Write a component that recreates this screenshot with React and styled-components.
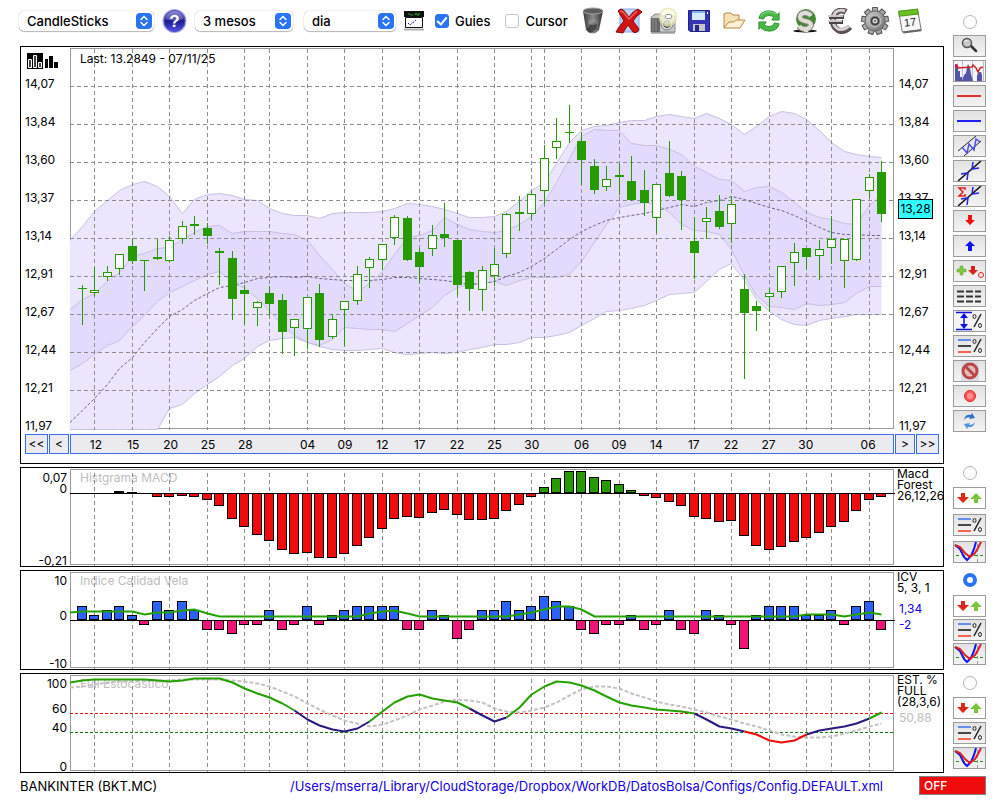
import React, { useState } from "react";
import styled, { createGlobalStyle, css } from "styled-components";

const GlobalStyle = createGlobalStyle`
    body {
        margin: 0;
        background: #fff;
        color: #000;
        font-family: Inter, "Liberation Sans", sans-serif;
        font-size: 12px;
    }
    * {
        box-sizing: border-box;
    }
`;

/* ---------- data ---------- */

const PLOT_W = 824;
const MAIN_H = 381;
const SUB_H = 96;

const MAIN_TOP = 48;

const ticks = [1, 4, 7, 10, 13, 15, 18, 21, 24, 27, 30, 33, 36, 37, 40, 43, 46, 49, 52, 55, 58, 60, 63];

const dates = [
    [1, "12"], [4, "15"], [7, "20"], [10, "25"], [13, "28"], [18, "04"], [21, "09"], [24, "12"], [27, "17"], [30, "22"],
    [33, "25"], [36, "30"], [40, "06"], [43, "09"], [46, "14"], [49, "17"], [52, "22"], [55, "27"], [58, "30"], [63, "06"],
];

const prices = ["14,07", "13,84", "13,60", "13,37", "13,14", "12,91", "12,67", "12,44", "12,21", "11,97"];

// high, body top, body bottom, low, rising
const candles = [
    [285, 288, 289, 325, 0], [267, 290, 293, 296, 1], [266, 272, 277, 281, 1], [254, 254, 269, 275, 1], [239, 246, 261, 264, 0],
    [260, 260, 261, 291, 0], [239, 257, 259, 260, 0], [236, 240, 261, 262, 1], [221, 226, 239, 244, 1], [216, 224, 226, 235, 0],
    [223, 228, 236, 244, 0], [248, 251, 253, 285, 0], [251, 258, 299, 320, 0], [285, 290, 294, 324, 0], [301, 302, 308, 326, 1],
    [286, 293, 304, 316, 0], [294, 300, 332, 354, 0], [319, 319, 328, 356, 1], [297, 297, 329, 349, 1], [284, 293, 340, 347, 0],
    [314, 319, 337, 339, 1], [301, 301, 310, 346, 1], [266, 274, 301, 305, 1], [257, 259, 268, 288, 1], [244, 244, 260, 270, 1],
    [215, 217, 238, 245, 1], [216, 218, 260, 261, 0], [248, 252, 267, 283, 0], [225, 235, 249, 256, 1], [203, 234, 238, 247, 0],
    [240, 240, 285, 295, 0], [271, 272, 289, 311, 0], [266, 270, 290, 311, 1], [248, 264, 276, 286, 1], [213, 214, 254, 258, 1],
    [196, 212, 214, 231, 0], [191, 194, 214, 220, 1], [145, 158, 191, 204, 1], [118, 141, 148, 159, 1], [105, 132, 133, 143, 0],
    [132, 141, 160, 185, 0], [159, 166, 190, 194, 0], [166, 179, 187, 191, 1], [164, 175, 177, 195, 0], [156, 181, 200, 201, 0],
    [170, 190, 203, 216, 0], [184, 184, 218, 233, 1], [141, 173, 196, 197, 0], [171, 176, 200, 230, 0], [217, 241, 253, 279, 0],
    [207, 218, 222, 239, 1], [195, 211, 227, 229, 0], [196, 204, 224, 243, 1], [274, 289, 313, 379, 0], [301, 306, 311, 331, 0],
    [288, 293, 297, 312, 1], [266, 266, 292, 298, 1], [243, 252, 263, 286, 1], [248, 248, 257, 270, 0], [240, 249, 256, 280, 1],
    [216, 239, 248, 264, 1], [239, 239, 261, 288, 1], [199, 199, 260, 261, 1], [174, 177, 191, 198, 1], [161, 172, 214, 222, 0],
];

// bands carry one extra leading point, on the left edge of the plot
const outerUpper = [
    240, 226, 211, 200, 190, 184, 181, 186, 196, 213, 199, 194, 193, 195, 199, 200, 208, 213, 215, 215, 218, 213, 212, 212, 212, 211,
    208, 203, 204, 206, 209, 213, 217, 217, 216, 211, 201, 190, 182, 163, 142, 130, 126, 125, 122, 120, 120, 116, 114, 116, 118, 113,
    118, 124, 134, 126, 116, 111, 113, 119, 130, 142, 151, 154, 156, 157,
];
const innerUpper = [
    309, 299, 293, 281, 272, 256, 253, 248, 247, 239, 232, 226, 225, 233, 231, 231, 231, 233, 234, 240, 255, 269, 283, 291, 283, 271,
    254, 237, 235, 230, 217, 224, 229, 231, 232, 230, 224, 216, 202, 182, 158, 136, 129, 130, 130, 143, 145, 145, 149, 154, 166, 172,
    179, 180, 191, 187, 186, 192, 202, 212, 217, 219, 223, 224, 205, 194,
];
const innerLower = [
    370, 363, 354, 345, 340, 326, 315, 301, 292, 286, 280, 274, 271, 282, 288, 298, 311, 325, 335, 342, 345, 339, 327, 328, 329, 329,
    331, 323, 315, 307, 295, 287, 284, 283, 281, 285, 280, 277, 277, 277, 274, 261, 242, 224, 207, 204, 202, 204, 212, 224, 230, 231,
    234, 249, 275, 295, 306, 307, 309, 303, 305, 304, 302, 293, 286, 286,
];
const outerLower = [
    429, 429, 429, 429, 429, 429, 429, 429, 408, 404, 393, 384, 376, 365, 358, 346, 340, 338, 337, 342, 346, 349, 350, 350, 349, 348,
    352, 354, 353, 352, 353, 352, 349, 347, 344, 344, 342, 337, 337, 335, 332, 325, 318, 311, 310, 308, 305, 300, 294, 293, 292, 281,
    269, 263, 280, 299, 311, 319, 324, 325, 320, 318, 316, 314, 314, 314,
];
const average = [
    422, 410, 398, 384, 368, 357, 342, 328, 316, 309, 300, 293, 287, 285, 282, 278, 277, 276, 277, 276, 278, 279, 280, 280, 280, 279,
    277, 277, 278, 279, 280, 282, 284, 283, 281, 276, 272, 266, 258, 249, 239, 231, 225, 220, 217, 215, 213, 210, 207, 204, 206, 202,
    200, 196, 199, 203, 207, 210, 215, 221, 227, 232, 234, 234, 235, 235,
];

const macd = [
    0, 0, 0, 2, 1, 0, -4, -4, -3, -4, -7, -13, -26, -34, -42, -48, -57, -61, -60, -65, -65, -61, -53, -45, -36, -26, -24, -25, -20,
    -17, -22, -27, -27, -26, -18, -12, -4, 6, 15, 22, 22, 16, 13, 9, 3, -3, -5, -9, -13, -24, -26, -29, -28, -43, -53, -57, -54, -49,
    -45, -40, -34, -29, -18, -7, -4,
];

const icv = [
    3, 1, 2, 3, 1, -1, 4, 2, 4, 2, -2, -2, -3, -1, -1, 2, -2, -1, 3, -1, 1, 2, 3, 3, 3, 3, -2, -2, 2, 1, -4, -2, 2, 2, 4, 2, 3, 5, 4,
    3, -2, -3, -1, -1, 1, -2, -1, 2, -2, -3, 2, 1, -1, -6, 1, 3, 3, 3, 1, 1, 2, -1, 3, 4, -2,
];
const icvLine = [
    40, 39, 39, 39, 39, 39, 42, 40, 40, 38, 37, 41, 44, 44, 44, 44, 44, 44, 44, 44, 44, 44, 44, 44, 41, 39, 38, 41, 44, 44, 44, 44,
    44, 44, 44, 44, 42, 40, 37, 34, 34, 37, 44, 44, 44, 44, 44, 44, 44, 44, 44, 44, 44, 44, 44, 44, 44, 44, 44, 42, 42, 42, 44, 42,
    40, 42,
];

const stochastic = [
    7, 5, 4, 4, 4, 4, 4, 5, 6, 5, 3, 3, 3, 7, 13, 18, 22, 28, 35, 44, 50, 54, 56, 53, 46, 36, 27, 21, 19, 23, 25, 27, 33, 40, 46, 42,
    32, 19, 11, 6, 7, 10, 15, 21, 27, 30, 32, 34, 35, 36, 38, 44, 51, 53, 56, 59, 65, 67, 65, 59, 55, 53, 51, 48, 43, 37,
];
const signal = [
    12, 11, 9, 7, 6, 6, 5, 5, 5, 4, 4, 4, 4, 5, 6, 8, 11, 16, 21, 28, 34, 40, 45, 48, 51, 49, 45, 40, 34, 30, 26, 24, 25, 27, 33, 36,
    37, 35, 32, 27, 20, 14, 11, 11, 13, 18, 22, 26, 29, 31, 34, 37, 41, 44, 48, 51, 55, 59, 61, 62, 62, 61, 58, 55, 51, 48,
];
// first point, last point, colour
const runs = [
    [0, 18, "#24a000"], [18, 24, "#2a1a80"], [24, 32, "#24a000"], [32, 35, "#2a1a80"], [35, 50, "#24a000"],
    [50, 54, "#2a1a80"], [54, 59, "#f00c0c"], [59, 64, "#2a1a80"], [64, 65, "#24a000"],
];

const xOf = i => Math.round(12 + 12.485 * i);
const points = (values, from = 0, top = 0) =>
    values.map((v, k) => `${k + from === 0 ? 0 : xOf(k + from - 1) + 0.5},${v - top + 0.5}`).join(" ");
const area = (upper, lower) =>
    `${points(upper, 0, MAIN_TOP)} ${points(lower, 0, MAIN_TOP).split(" ").reverse().join(" ")}`;

/* ---------- layout ---------- */

const Page = styled.div`
    display: grid;
    grid-template-columns: minmax(0, 1fr) 33px;
    column-gap: 9px;
    padding: 0 14px 0 20px;
`;

const Toolbar = styled.header`
    display: flex;
    align-items: center;
    height: 46px;
    padding-bottom: 4px;
    margin-left: -1px;
`;

const Panels = styled.div`
    display: grid;
    gap: 3px;
`;

const Panel = styled.section`
    display: grid;
    grid-template-columns: 49px minmax(0, 1fr) 49px;
    border: 1px solid #000;
    height: ${p => (p.$main ? "418px" : "100px")};
    grid-template-rows: ${p => (p.$main ? "387px 20px" : "98px")};
`;

const Plot = styled.div`
    position: relative;
    padding-top: 1px;
`;

const PlotSvg = styled.svg`
    position: relative;
    display: block;
    width: 100%;
    height: ${p => p.$height}px;
    overflow: visible;
`;

const PlotTitle = styled.div`
    position: absolute;
    top: ${p => (p.$muted ? 2 : 4)}px;
    left: 10px;
    line-height: 16px;
    color: ${p => (p.$muted ? "#bdbdbd" : "#000")};
    z-index: ${p => (p.$muted ? 0 : 1)};
`;

const PriceAxis = styled.div`
    position: relative;
    display: flex;
    flex-direction: column;
    padding: ${p => (p.$right ? "29px 0 0 5px" : "6px 0 0 4px")};
`;

const PriceList = styled.div`
    display: flex;
    flex: 1;
    flex-direction: column;
    justify-content: space-between;
    line-height: 16px;
`;

const PriceTag = styled.div`
    position: absolute;
    top: 152px;
    left: 4px;
    width: 35px;
    height: 20px;
    line-height: 18px;
    text-align: center;
    background: #3ff;
    border: 1px solid #000;
`;

const CornerIcon = styled.svg`
    display: block;
    margin: 0 0 7px 2px;
`;

const Nav = styled.div`
    display: flex;
    gap: 1px;
    padding-left: ${p => (p.$right ? 1 : 4)}px;
`;

const bluish = css`
    height: 20px;
    border: 1px solid #3a6cf4;
    background: #ebeaef;
    color: #000;
`;

const NavButton = styled.button`
    ${bluish}
    width: ${p => (p.$wide ? 23 : 20)}px;
    padding: 0;
    font: inherit;
    line-height: 18px;
`;

const DateAxis = styled.div`
    ${bluish}
    display: grid;
    grid-template-columns: repeat(66, minmax(0, 1fr));
    line-height: 20px;
`;

const DateLabel = styled.span`
    grid-row: 1;
    grid-column: ${p => p.$index + 1} / span 2;
    justify-self: center;
`;

const Scale = styled.svg`
    display: block;
    overflow: visible;
    font-size: 12px;
`;

const Legend = styled.div`
    padding: 0 0 0 3px;
    line-height: 11px;
    white-space: nowrap;
`;

const LegendValues = styled.div`
    margin-top: ${p => (p.$tight ? 3 : 8)}px;
    padding-left: 2px;
    line-height: 16px;
    color: ${p => p.$color};
`;

const Rail = styled.aside`
    display: grid;
    grid-template-rows: 451px 107px 103px 96px;
    padding-top: 15px;
`;

const RailGroup = styled.div`
    display: flex;
    flex-direction: column;
    align-items: center;
    gap: ${p => p.$gap}px;
`;

const RailButton = styled.button`
    width: 33px;
    height: 22px;
    padding: 0;
    border: 1px solid #9c9c9c;
    background: ${p => (p.$plain ? "#fff" : "linear-gradient(#e2e2e2, #f3f3f3)")};

    svg {
        display: block;
    }
`;

const Radio = styled.input`
    appearance: none;
    flex: none;
    width: 14px;
    height: 14px;
    margin: 0 0 ${p => p.$space}px;
    border: 1px solid #b4b4b4;
    border-radius: 50%;
    background: #fff;

    &:checked {
        border: 4px solid #2a73f6;
    }
`;

const Footer = styled.footer`
    grid-column: 1 / -1;
    display: flex;
    align-items: center;
    height: 25px;
    font-size: 13px;
`;

const ConfigPath = styled.a`
    margin-left: auto;
    margin-right: 36px;
    color: #1400e6;
    text-decoration: none;
`;

const OffButton = styled.button`
    width: 67px;
    height: 19px;
    padding: 0 0 0 4px;
    border: 1px solid #808080;
    background: #f00c0c;
    color: #fff;
    font: inherit;
    font-size: 12px;
    font-weight: 500;
    text-align: left;
`;

/* ---------- toolbar controls ---------- */

const Picker = styled.div`
    display: grid;
    align-items: center;
    width: ${p => p.$width}px;
`;

const Pickers = styled.div`
    display: flex;
    gap: 11px;
`;

const Select = styled.select`
    appearance: none;
    grid-area: 1 / 1;
    height: 20px;
    padding: 0 8px;
    border: 0;
    border-radius: 5px;
    background: #fff;
    box-shadow: 0 0 1px rgba(0, 0, 0, 0.45), 0 1px 1px rgba(0, 0, 0, 0.25);
    color: #000;
    font: inherit;
    font-size: 13px;
    font-weight: 500;
`;

const Stepper = styled.svg`
    grid-area: 1 / 1;
    justify-self: end;
    margin-right: 2px;
    pointer-events: none;
`;

const Tool = styled.button`
    display: grid;
    place-items: center;
    padding: 0;
    border: 0;
    background: none;
`;

const HelpTool = styled(Tool)`
    margin: 0 8px;
`;

const TrayTool = styled(Tool)`
    margin: 0 11px 0 8px;
`;

const Tools = styled.div`
    display: grid;
    grid-template-columns: repeat(10, minmax(0, 1fr));
    width: 352px;
    margin-left: 8px;
`;

const Checks = styled.div`
    display: flex;
    gap: 15px;
`;

const Check = styled.label`
    display: flex;
    align-items: center;
    gap: 6px;
    font-size: 13px;
    font-weight: 500;
`;

const Box = styled.input`
    appearance: none;
    display: grid;
    place-items: center;
    width: 14px;
    height: 14px;
    margin: 0;
    border: 1px solid #c4c4c4;
    border-radius: 3px;
    background: #fff;

    &:checked {
        border-color: #2a73f6;
        background: #2a73f6;
    }

    &:checked::after {
        content: "";
        width: 4px;
        height: 8px;
        margin-bottom: 2px;
        border: solid #fff;
        border-width: 0 2px 2px 0;
        transform: rotate(40deg);
    }
`;

/* ---------- toolbar icons ---------- */

const HelpIcon = () => (
    <svg width="25" height="24" viewBox="0 0 24 24">
        <defs>
            <linearGradient id="help" x1="0" y1="0" x2="0" y2="1">
                <stop offset="0" stopColor="#6a6ac8" />
                <stop offset="0.5" stopColor="#1c1c8c" />
                <stop offset="1" stopColor="#5050e8" />
            </linearGradient>
        </defs>
        <circle cx="12" cy="12" r="12" fill="#a8a8e8" />
        <circle cx="12" cy="12" r="10.5" fill="url(#help)" stroke="#4c4cc0" />
        <path d="M3 10a9 8 0 0 1 18 0Q12 13 3 10Z" fill="#fff" opacity="0.22" />
        <text x="12" y="18" textAnchor="middle" fontSize="17" fontWeight="700" fill="#fff">?</text>
    </svg>
);

const TrayIcon = () => (
    <svg width="20" height="20" viewBox="0 0 20 20">
        <path d="M0 0h20v6H0z" fill="#111" />
        <path d="M4 3h2l1 1h2M11 4l1-2 1 2h2V2" stroke="#20a020" fill="none" />
        <path d="M1.500 6.500h17v10h-17z" fill="#fff" stroke="#111" />
        <path d="M0 18.500h20" stroke="#b0b0b0" strokeWidth="2" />
        <path d="M4 12l2 2 2-2 2-1 2-2" stroke="#2020d0" fill="none" strokeDasharray="2 1" />
    </svg>
);

const TrashIcon = () => (
    <svg width="24" height="28" viewBox="0 0 24 28">
        <defs>
            <linearGradient id="bin">
                <stop offset="0" stopColor="#3a3a3a" />
                <stop offset="0.5" stopColor="#8c8c8c" />
                <stop offset="1" stopColor="#333" />
            </linearGradient>
        </defs>
        <path d="M2 4l3 19q7 7 13 0L22 4Z" fill="url(#bin)" />
        <path d="M6 22q4-6 10-8l-1 8q-4 5-8 3z" fill="#222" opacity="0.6" />
        <ellipse cx="12" cy="15" rx="5" ry="3" fill="#999" opacity="0.6" />
        <ellipse cx="12" cy="4" rx="10" ry="3" fill="#5c5c5c" stroke="#a0a0a0" />
    </svg>
);

const DeleteIcon = () => (
    <svg width="28" height="28" viewBox="0 0 28 28">
        <path d="M5 2h16l3 3v20H5z" fill="#b8d4f8" stroke="#88aee4" />
        <path d="M3 4q4-4 7 1l4 5q4-6 9-8l4 3q-6 4-9 9l6 8q-2 5-6 3l-5-7q-3 4-5 8l-7-1q3-6 8-11Z" fill="#d01414" stroke="#8c0808" />
        <path d="M5 5q2-2 4 1l5 6 8-8" stroke="#f06464" strokeWidth="1.500" fill="none" />
    </svg>
);

const CameraIcon = () => (
    <svg width="28" height="28" viewBox="0 0 28 28">
        <path d="M1 11q0-2 2-2l2-2h5l2 2h13v16H1z" fill="#c8c8c8" stroke="#888" />
        <path d="M1 11h9v14H1z" fill="#666" />
        <path d="M3 11v13M6 11v13" stroke="#8e8e8e" />
        <circle cx="17" cy="17" r="6" fill="#ddd" stroke="#777" />
        <circle cx="17" cy="17" r="3.500" fill="#888" stroke="#444" />
        <circle cx="18" cy="10" r="8.500" fill="#ffffe0" opacity="0.7" stroke="#e8e4a8" strokeWidth="2" />
        <rect x="15.500" y="7.500" width="6" height="4" rx="1" fill="#fff" stroke="#999" />
        <path d="M1 26h24" stroke="#777" />
    </svg>
);

const SaveIcon = () => (
    <svg width="22" height="22" viewBox="0 0 22 22">
        <path d="M.5.5h21v21H2l-1.500-1.500Z" fill="#3434b4" stroke="#20208c" />
        <path d="M4 1h13v9H4z" fill="#d4ecf8" />
        <path d="M4 1h13v2H4z" fill="#88b4e4" />
        <path d="M5 14h12v7H5z" fill="#c4c4cc" />
        <path d="M7 15h4v6H7z" fill="#28288c" />
        <path d="M19 2h1v2h-1z" fill="#fff" />
    </svg>
);

const FolderIcon = () => (
    <svg width="24" height="20" viewBox="0 0 24 20">
        <path d="M2 17V3l1-1h6l2 2h6v5" fill="#f6e0b8" stroke="#b98843" />
        <path d="M2 17l5-6h5l2-2h9l-5 8Z" fill="#fff2d8" stroke="#b98843" />
    </svg>
);

const RefreshIcon = () => (
    <svg width="24" height="24" viewBox="0 0 26 24">
        <path d="M2 9Q4 1 13 1q6 0 9 4l2-2v8h-8l2-3q-2-2-5-2-5 0-6 4Z" fill="#48b848" stroke="#2c902c" />
        <path d="M24 15q-2 8-11 8-6 0-9-4l-2 2v-8h8l-2 3q2 2 5 2 5 0 6-4Z" fill="#48b848" stroke="#2c902c" />
        <path d="M4 7q3-5 9-5 5 0 8 3" stroke="#98e098" fill="none" />
    </svg>
);

const DollarIcon = () => (
    <svg width="26" height="26" viewBox="0 0 26 26">
        <ellipse cx="13" cy="23" rx="12" ry="1.500" fill="#111" />
        <circle cx="14" cy="11" r="10" fill="#3f8a30" />
        <path d="M6 7a9 9 0 0 1 15-2l-3 2q-6-4-10 2Z" fill="#9cc890" />
        <path d="M19 8q-2-3-6-3-5 0-5 4 0 3 5 4 6 1 6 4-1 4-6 4-4 0-6-3" stroke="#808078" strokeWidth="6" fill="none" />
        <path d="M19 8q-2-3-6-3-5 0-5 4 0 3 5 4 6 1 6 4-1 4-6 4-4 0-6-3M13 3v2M14 20v4" stroke="#deded6" strokeWidth="4" fill="none" />
    </svg>
);

const EuroIcon = () => (
    <svg width="26" height="26" viewBox="0 0 26 26">
        <path d="M19 4q-5-3-9 0-4 3-4 9t5 9q6 3 12-3" stroke="#5c5054" strokeWidth="6" fill="none" />
        <path d="M18 3q-5-2-9 1-3 3-3 8 0 6 5 9 6 2 11-3" stroke="#d4ced0" strokeWidth="3" fill="none" />
        <path d="M2 9h15M2 14h14" stroke="#4c4448" strokeWidth="4" />
        <path d="M1 8h15M1 13h14" stroke="#ccc6c8" strokeWidth="2" />
    </svg>
);

const GearIcon = () => (
    <svg width="30" height="30" viewBox="0 0 30 30">
        <defs>
            <linearGradient id="gear" x1="0" y1="0" x2="1" y2="1">
                <stop offset="0" stopColor="#d0d0d0" />
                <stop offset="1" stopColor="#6c6c6c" />
            </linearGradient>
        </defs>
        {[0, 40, 80, 120, 160, 200, 240, 280, 320].map(a => (
            <path key={a} d="M12 7l.5-5.500h5L18 7z" fill="#a8a8a8" stroke="#555" transform={`rotate(${a} 15 15)`} />
        ))}
        <circle cx="15" cy="15" r="10" fill="url(#gear)" stroke="#666" />
        <circle cx="15" cy="15" r="6" fill="#999" stroke="#c8c8c8" />
        <circle cx="15" cy="15" r="3.500" fill="#ddd" stroke="#444" strokeWidth="2" />
        <circle cx="15" cy="15" r="1" fill="#555" />
    </svg>
);

const CalendarIcon = () => (
    <svg width="26" height="26" viewBox="0 0 26 26">
        <g transform="rotate(-7 13 13)">
            <path d="M3 4h19l1 19H4z" fill="#f8f8f8" stroke="#777" />
            <path d="M3 2h19v5H3z" fill="#6cc024" stroke="#4c9810" />
            <path d="M5 23.500h18" stroke="#666" strokeWidth="2" />
            <text x="13" y="18" textAnchor="middle" fontSize="11" fontWeight="500" fill="#222">17</text>
        </g>
    </svg>
);

const tools = [
    ["Paperera", TrashIcon], ["Esborrar", DeleteIcon], ["Captura", CameraIcon], ["Desar", SaveIcon], ["Obrir", FolderIcon],
    ["Actualitzar", RefreshIcon], ["Dolar", DollarIcon], ["Euro", EuroIcon], ["Opcions", GearIcon], ["Calendari", CalendarIcon],
];

/* ---------- rail icons, all on a 31x20 canvas ---------- */

const Percent = () => (
    <g stroke="#222" fill="none">
        <path d="M20 16L27 3" strokeWidth="1.500" />
        <ellipse cx="20.500" cy="5.500" rx="1.500" ry="2" />
        <ellipse cx="26" cy="14.500" rx="1.500" ry="2" />
    </g>
);

const Crossing = () => (
    <>
        <path d="M4 20L27 0" stroke="#111" strokeWidth="1.500" />
        <path d="M7 13l7-1-1 7M25 7l-7 1 1-7" stroke="#2626d8" strokeWidth="1.500" fill="none" />
    </>
);

const glyphs = {
    Lupa: (
        <>
            <path d="M17 10l5 5" stroke="#333" strokeWidth="2.500" strokeLinecap="round" />
            <circle cx="13" cy="7" r="4.500" fill="#c8c8c8" stroke="#555" strokeWidth="1.500" />
            <path d="M10.500 6q1-2 3-1.500" stroke="#fff" fill="none" />
        </>
    ),
    Volum: (
        <>
            <path d="M0 0h31v20H0z" fill="#f6f6fa" />
            <path d="M8.500 0v20M18.500 0v20M29.500 0v20" stroke="#bbbbdc" />
            <path d="M1 20V3h2v3h1v4h2v6h2v4M8 20l2-6 2-2 1-6 1-3 2 4 1 6 2 7M23 20v-6l2-3 2 0 1 3v6z" fill="#5454a8" />
            <path d="M1 6l2-2 1 3 14-1 1-2 3 3 2 4 2-4 3-1" stroke="#d42020" strokeWidth="1.500" fill="none" />
        </>
    ),
    "Linia vermella": <path d="M3 10h24" stroke="#e03030" strokeWidth="2" />,
    "Linia blava": <path d="M3 10h24" stroke="#2020f0" strokeWidth="2" />,
    Canal: (
        <>
            <path d="M4 15L22 0M10 20L27 5" stroke="#222" />
            <path d="M8 11l5 6 2-9 5 6 2-11 4 3" stroke="#5050e0" strokeWidth="1.500" fill="none" />
        </>
    ),
    Creuament: <Crossing />,
    Suma: (
        <>
            <Crossing />
            <path d="M11 4V2H5l4 4-4 4h6V8" stroke="#e02020" strokeWidth="1.500" fill="none" />
        </>
    ),
    Baixa: <path d="M14 4h4v5h3l-5 5-5-5h3z" fill="#f01010" />,
    Puja: <path d="M14 15h4v-5h3l-5-5-5 5h3z" fill="#1010f0" />,
    Afegir: (
        <>
            <path d="M6 5h3v3h3v3H9v3H6v-3H3V8h3z" fill="#80c840" stroke="#5ca028" strokeWidth="0.500" />
            <path d="M17 5h4v4h3l-5 5-5-5h3z" fill="#d82418" />
            <circle cx="27" cy="14" r="2.500" fill="none" stroke="#e02020" />
        </>
    ),
    Guions: <path d="M3 5.500h24M3 10.500h24M3 15.500h24" stroke="#333" strokeWidth="2" strokeDasharray="7 2" />,
    Rang: (
        <>
            <path d="M0 0h31v20H0z" fill="#f4f4f4" />
            <path d="M2 1.500h16M2 18.500h16M10 4v12" stroke="#1010e0" strokeWidth="1.500" />
            <path d="M10 2l4 5H6zM10 18l4-5H6z" fill="#1010e0" />
            <Percent />
        </>
    ),
    Nivells: (
        <>
            <path d="M4 4h13" stroke="#3c6cf0" strokeWidth="1.500" />
            <path d="M4 10h13" stroke="#111" strokeWidth="1.500" />
            <path d="M4 16h13" stroke="#f06450" strokeWidth="2" />
            <Percent />
        </>
    ),
    Prohibit: (
        <>
            <path d="M7 0h18v20H7z" fill="#dcdce6" />
            <circle cx="16" cy="10" r="7" fill="#e4bcbc" stroke="#b84848" strokeWidth="3" />
            <path d="M11 5l10 10" stroke="#b84848" strokeWidth="3" />
        </>
    ),
    Gravar: (
        <>
            <circle cx="16" cy="10" r="5.500" fill="#ff5858" stroke="#e02828" />
            <circle cx="16" cy="10" r="3" fill="#ff9090" />
        </>
    ),
    Recarregar: (
        <>
            <path d="M10 9q1-6 7-5l1-2 3 5-6 1 1-2q-4 0-6 3Z" fill="#2c74c8" />
            <path d="M21 11q-1 6-7 5l-1 2-3-5 6-1-1 2q4 0 6-3Z" fill="#4c94e0" />
        </>
    ),
    Senyals: (
        <>
            <path d="M7 5h4v4h4l-6 6-6-6h4z" fill="#dc2818" />
            <path d="M20 15h4v-4h4l-6-6-6 6h4z" fill="#7cc43c" />
        </>
    ),
    Corbes: (
        <>
            <path d="M2 13.500h28" stroke="#209020" strokeDasharray="3 3" />
            <path d="M23.500 2v18" stroke="#999" strokeDasharray="3 2" />
            <path d="M1 3l5 4 4 8 3 3 4-4 3-7 2-7" stroke="#1414f0" strokeWidth="2" fill="none" />
            <path d="M1 3l5 2 5 6 5 4 5-4 3-5 3-6" stroke="#dc2020" strokeWidth="2" fill="none" />
        </>
    ),
};

const mainTools = [
    "Lupa", "Volum", "Linia vermella", "Linia blava", "Canal", "Creuament", "Suma", "Baixa",
    "Puja", "Afegir", "Guions", "Rang", "Nivells", "Prohibit", "Gravar", "Recarregar",
];
const subTools = ["Senyals", "Nivells", "Corbes"];

const RailTool = ({ name }) => (
    <RailButton type="button" aria-label={name} $plain={name === "Senyals"}>
        <svg width="31" height="20" viewBox="0 0 31 20">{glyphs[name]}</svg>
    </RailButton>
);

/* ---------- chart parts ---------- */

const Frame = ({ height }) => (
    <rect x="0.5" y="0.5" width={PLOT_W - 1} height={height - 1} fill="none" stroke="#999" />
);

const Guides = ({ height, from }) => (
    <g stroke="#8e8e8e" strokeDasharray="4 3">
        {ticks.map(i => (
            <line key={i} x1={xOf(i) + 0.5} x2={xOf(i) + 0.5} y1={from} y2={height + 1} />
        ))}
    </g>
);

const Bars = ({ values, zero, unit, up, down }) =>
    values.map((v, i) => {
        if (!v) return null;
        const size = Math.round(Math.abs(v) * unit);
        return (
            <rect
                key={i}
                x={xOf(i) - 4.5}
                y={v > 0 ? zero - size + 0.5 : zero + 0.5}
                width="9"
                height={Math.max(size - 1, 1)}
                fill={v > 0 ? up : down}
                stroke="#000"
            />
        );
    });

const Picklist = ({ label, value, width, options }) => (
    <Picker $width={width}>
        <Select aria-label={label} defaultValue={value}>
            {options.map(o => <option key={o}>{o}</option>)}
        </Select>
        <Stepper width="16" height="16" viewBox="0 0 16 16">
            <rect width="16" height="16" rx="4" fill="#2a73f6" />
            <path d="M5 6.500l3-3 3 3M5 9.500l3 3 3-3" stroke="#fff" strokeWidth="1.500" fill="none" strokeLinecap="round" />
        </Stepper>
    </Picker>
);

const MainPanel = ({ guides }) => (
    <Panel $main>
        <PriceAxis>
            <CornerIcon width="32" height="16" viewBox="0 0 32 16">
                <path d="M0 0h16v16H0z" fill="#000" />
                <path d="M1.500 6.500h3v8h-3zM6.500 2.500h3v12h-3zM11.500 9.500h3v5h-3z" fill="#444" stroke="#fff" />
                <path d="M18 6h3v9h-3zM22 3h4v12h-4zM27 9h4v6h-4z" fill="#000" />
            </CornerIcon>
            <PriceList>{prices.map(p => <span key={p}>{p}</span>)}</PriceList>
        </PriceAxis>
        <Plot>
            <PlotTitle>Last: 13.2849 - 07/11/25</PlotTitle>
            <PlotSvg $height={MAIN_H} viewBox={`0 0 ${PLOT_W} ${MAIN_H}`} preserveAspectRatio="none">
                <Frame height={MAIN_H} />
                <polygon points={area(outerUpper, outerLower)} fill="#ebe6fe" />
                <polygon points={area(innerUpper, innerLower)} fill="#e3dbfd" />
                <g fill="none" stroke="#c6c0e2">
                    {[outerUpper, innerUpper, innerLower, outerLower].map((b, k) => (
                        <polyline key={k} points={points(b, 0, MAIN_TOP)} />
                    ))}
                </g>
                {guides && <Guides height={MAIN_H} from={1} />}
                {guides && (
                    <g stroke="#8e8e8e" strokeDasharray="4 3">
                        {prices.slice(0, -1).map((p, k) => (
                            <line key={p} x1="0" x2={PLOT_W + 2} y1={38.5 + 38 * k} y2={38.5 + 38 * k} />
                        ))}
                    </g>
                )}
                <polyline points={points(average, 0, MAIN_TOP)} fill="none" stroke="#6c6484" strokeDasharray="3 2" />
                {candles.map(([high, top, bottom, low, rising], i) => (
                    <g key={i}>
                        <rect x={xOf(i)} y={high - MAIN_TOP} width="1" height={low - high} fill="#279a00" />
                        {rising ? (
                            <rect x={xOf(i) - 3.5} y={top - MAIN_TOP + 0.5} width="8" height={bottom - top - 1} fill="#fff" stroke="#279a00" />
                        ) : (
                            <rect x={xOf(i) - 4} y={top - MAIN_TOP} width="9" height={bottom - top} fill="#279a00" />
                        )}
                    </g>
                ))}
            </PlotSvg>
        </Plot>
        <PriceAxis $right>
            <PriceList>{prices.map(p => <span key={p}>{p}</span>)}</PriceList>
            <PriceTag>13,28</PriceTag>
        </PriceAxis>
        <Nav>
            <NavButton type="button" $wide>&lt;&lt;</NavButton>
            <NavButton type="button">&lt;</NavButton>
        </Nav>
        <DateAxis>
            {dates.map(([i, d]) => <DateLabel key={i} $index={i}>{d}</DateLabel>)}
        </DateAxis>
        <Nav $right>
            <NavButton type="button">&gt;</NavButton>
            <NavButton type="button" $wide>&gt;&gt;</NavButton>
        </Nav>
    </Panel>
);

const SubPanel = ({ title, scale, guides, legend, children }) => (
    <Panel>
        <Scale width="49" height="98">
            {scale.map(([label, y]) => (
                <text key={label} x="46" y={y + 4} textAnchor="end">{label}</text>
            ))}
        </Scale>
        <Plot>
            <PlotTitle $muted>{title}</PlotTitle>
            <PlotSvg $height={SUB_H} viewBox={`0 0 ${PLOT_W} ${SUB_H}`} preserveAspectRatio="none">
                <Frame height={SUB_H} />
                {guides && <Guides height={SUB_H} from={4} />}
                {children}
            </PlotSvg>
        </Plot>
        <Legend>{legend}</Legend>
    </Panel>
);

export default function App() {
    const [guides, setGuides] = useState(true);
    const [cursor, setCursor] = useState(false);
    const [active, setActive] = useState(2);

    const renderRadio = (index, space) => (
        <Radio
            type="radio"
            name="panel"
            aria-label={`Panell ${index + 1}`}
            $space={space}
            checked={active === index}
            onChange={() => setActive(index)}
        />
    );

    return (
        <Page>
            <GlobalStyle />
            <div>
                <Toolbar>
                    <Picklist label="Tipus" value="CandleSticks" width={135} options={["CandleSticks", "Barres", "Linia"]} />
                    <HelpTool type="button" aria-label="Ajuda"><HelpIcon /></HelpTool>
                    <Pickers>
                        <Picklist label="Periode" value="3 mesos" width={98} options={["1 mes", "3 mesos", "6 mesos"]} />
                        <Picklist label="Interval" value="dia" width={92} options={["dia", "setmana", "mes"]} />
                    </Pickers>
                    <TrayTool type="button" aria-label="Monitor"><TrayIcon /></TrayTool>
                    <Checks>
                        <Check>
                            <Box type="checkbox" checked={guides} onChange={() => setGuides(!guides)} />
                            Guies
                        </Check>
                        <Check>
                            <Box type="checkbox" checked={cursor} onChange={() => setCursor(!cursor)} />
                            Cursor
                        </Check>
                    </Checks>
                    <Tools>
                        {tools.map(([name, Icon]) => (
                            <Tool key={name} type="button" aria-label={name}><Icon /></Tool>
                        ))}
                    </Tools>
                </Toolbar>
                <Panels>
                    <MainPanel guides={guides} />
                    <SubPanel
                        title="Histgrama MACD"
                        scale={[["0,07", 10], ["0", 21], ["-0,21", 93]]}
                        guides={guides}
                        legend={<>Macd<br />Forest<br />26,12,26</>}
                    >
                        <Bars values={macd} zero={24} unit={1} up="#279a00" down="#f00c0c" />
                        <line x1="0" x2={PLOT_W + 1} y1="24.500" y2="24.500" stroke="#000" />
                    </SubPanel>
                    <SubPanel
                        title="Indice Calidad Vela"
                        scale={[["10", 10], ["0", 45], ["-10", 93]]}
                        guides={guides}
                        legend={<>ICV<br />5, 3, 1<LegendValues $color="#1400e6">1,34<br />-2</LegendValues></>}
                    >
                        <Bars values={icv} zero={48} unit={4.8} up="#2a62fa" down="#f01478" />
                        <line x1="0" x2={PLOT_W + 1} y1="48.500" y2="48.500" stroke="#000" />
                        <polyline points={points(icvLine)} fill="none" stroke="#24a000" strokeWidth="2" />
                    </SubPanel>
                    <SubPanel
                        title="Full Estocastico"
                        scale={[["100", 10], ["60", 35], ["40", 54], ["0", 93]]}
                        guides={guides}
                        legend={<>EST. %<br />FULL<br />(28,3,6)<LegendValues $tight $color="#bdbdbd">50,88</LegendValues></>}
                    >
                        <line x1="0" x2={PLOT_W} y1="38.500" y2="38.500" stroke="#f00c0c" strokeDasharray="3 2" />
                        <line x1="0" x2={PLOT_W} y1="57.500" y2="57.500" stroke="#107810" strokeDasharray="3 2" />
                        <polyline points={points(signal)} fill="none" stroke="#c2c2c2" strokeWidth="2" strokeDasharray="4 2" />
                        {runs.map(([from, to, color]) => (
                            <polyline
                                key={from}
                                points={points(stochastic.slice(from, to + 1), from)}
                                fill="none"
                                stroke={color}
                                strokeWidth="2"
                                strokeLinejoin="round"
                            />
                        ))}
                    </SubPanel>
                </Panels>
            </div>
            <Rail>
                <RailGroup $gap={3}>
                    {renderRadio(0, 3)}
                    {mainTools.map(name => <RailTool key={name} name={name} />)}
                </RailGroup>
                <RailGroup $gap={5}>
                    {renderRadio(1, 2)}
                    {subTools.map(name => <RailTool key={name} name={name} />)}
                </RailGroup>
                <RailGroup $gap={2}>
                    {renderRadio(2, 6)}
                    {subTools.map(name => <RailTool key={name} name={name} />)}
                </RailGroup>
                <RailGroup $gap={3}>
                    {renderRadio(3, 4)}
                    {subTools.map(name => <RailTool key={name} name={name} />)}
                </RailGroup>
            </Rail>
            <Footer>
                <span>BANKINTER (BKT.MC)</span>
                <ConfigPath href="#config">
                    /Users/mserra/Library/CloudStorage/Dropbox/WorkDB/DatosBolsa/Configs/Config.DEFAULT.xml
                </ConfigPath>
                <OffButton type="button">OFF</OffButton>
            </Footer>
        </Page>
    );
}
